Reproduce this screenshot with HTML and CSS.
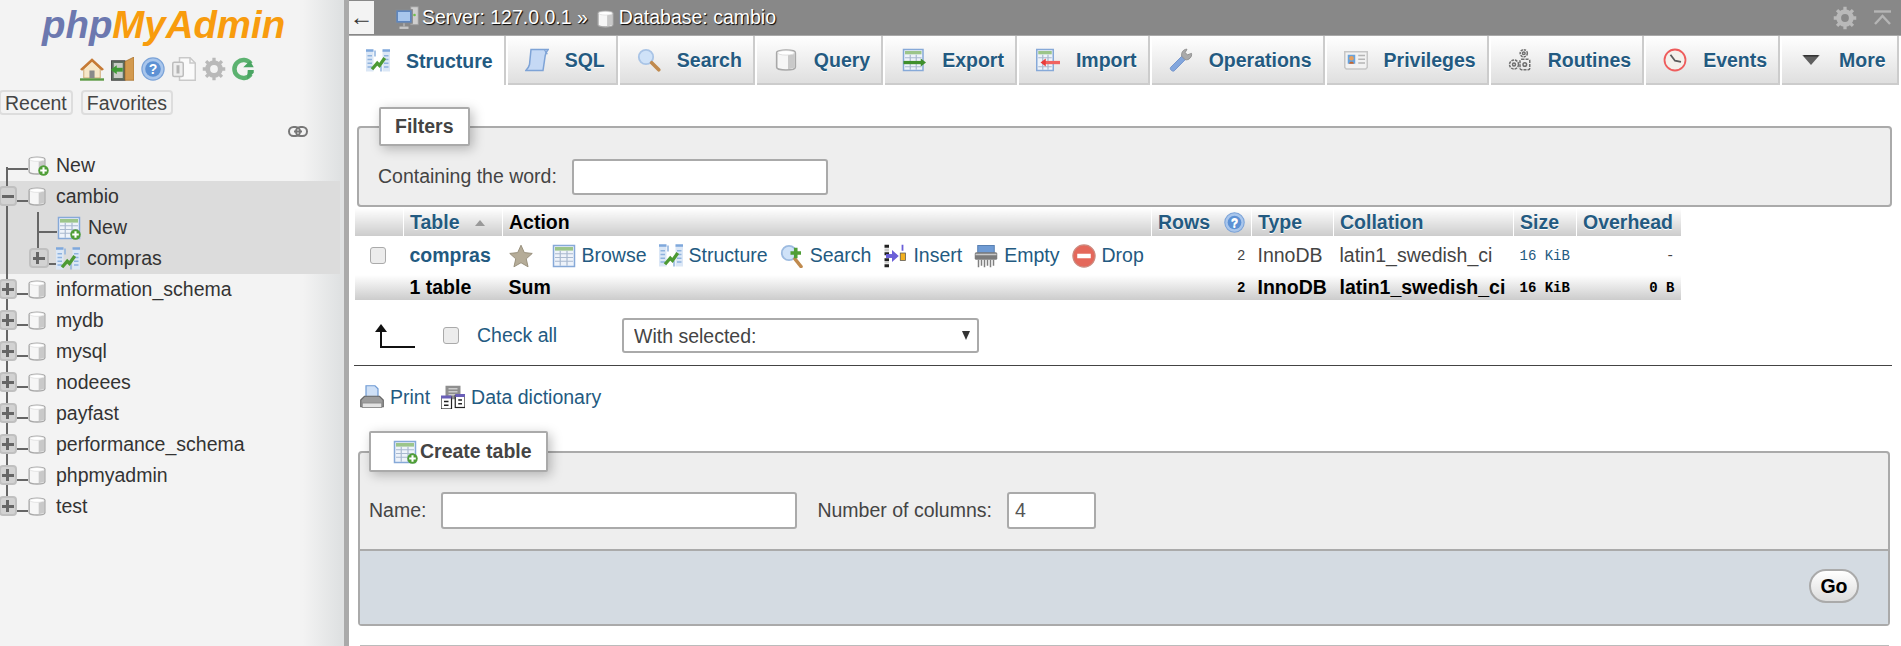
FILE: index.html
```html
<!DOCTYPE html>
<html lang="en">
<head>
    <meta charset="UTF-8">
    <title>127.0.0.1 / cambio | phpMyAdmin</title>
    <link rel="stylesheet" href="styles.css">
</head>
<body>

    <!-- Icon sprite -->
    <svg class="sprite" xmlns="http://www.w3.org/2000/svg">
        <symbol id="i-db" viewBox="0 0 16 18">
            <path d="M1 3.5C1 1 15 1 15 3.5V14.5C15 17.2 1 17.2 1 14.5Z" fill="#f6f6f6" stroke="#a8a8a8" stroke-width="1.2"/>
            <path d="M9.5 5.5V15.8C12 15.6 14.3 15 14.4 14.2V4.5Z" fill="#c9c9c9"/>
            <ellipse cx="8" cy="3.6" rx="6.4" ry="1.7" fill="#fff" stroke="#d2d2d2" stroke-width=".5"/>
        </symbol>
        <symbol id="i-plus-badge" viewBox="0 0 8 8">
            <circle cx="4" cy="4" r="3.8" fill="#4f9e37"/>
            <path d="M4 1.6V6.4M1.6 4H6.4" stroke="#fff" stroke-width="1.5"/>
        </symbol>
        <symbol id="i-table" viewBox="0 0 16 16">
            <rect x="1" y="1" width="14" height="14" fill="#eef3fa" stroke="#86a9d8"/>
            <rect x="2" y="2" width="12" height="2.4" fill="#9cc58a"/>
            <path d="M2 6.5H14M2 9H14M2 11.5H14M5.5 4.5V14.5M10 4.5V14.5" stroke="#a9b9cf" stroke-width=".8"/>
        </symbol>
        <symbol id="i-structure" viewBox="0 0 16 16">
            <rect x="0" y="1" width="5" height="14" fill="#dbe7f6"/>
            <rect x="11" y="1" width="5" height="14" fill="#dbe7f6"/>
            <path d="M0 1H5M11 1H16" stroke="#7fa8dc" stroke-width="1.6"/>
            <path d="M1 4.5H4M1 7H4M1 9.5H4M1 12H4M12 4.5H15M12 7H15M12 9.5H15M12 12H15" stroke="#8fb3de" stroke-width=".9"/>
            <path d="M6 1V5M10 11V15" stroke="#8fb3de" stroke-width="1"/>
            <path d="M4 13.5L7.5 9.5L9 11L12.5 6" fill="none" stroke="#4d9a33" stroke-width="2.2"/>
        </symbol>
        <symbol id="i-sql" viewBox="0 0 16 16">
            <path d="M4 1H15.5C14.5 2 14 3 13.5 5L12 15H.5C1.8 14 2.5 13 3 11Z" fill="#c5d9f5" stroke="#7ea3d6"/>
            <path d="M13 1.2C13.5 2.5 14 3.4 15 4" fill="none" stroke="#7ea3d6" stroke-width=".7"/>
        </symbol>
        <symbol id="i-search" viewBox="0 0 16 16">
            <circle cx="6" cy="6" r="4.8" fill="#cfe2f8" stroke="#a9c4e6" stroke-width="1.2"/>
            <path d="M9.8 9.8L14.5 14.5" stroke="#c08a4e" stroke-width="2.4" stroke-linecap="round"/>
        </symbol>
        <symbol id="i-search-add" viewBox="0 0 16 16">
            <circle cx="6" cy="6" r="4.8" fill="#cfe2f8" stroke="#9dbbe0" stroke-width="1.2"/>
            <path d="M10 10L14 15" stroke="#c08a4e" stroke-width="2.4" stroke-linecap="round"/>
            <path d="M10.5 2.5V9.5M7 6H14" stroke="#4f9e37" stroke-width="2.4"/>
        </symbol>
        <symbol id="i-export" viewBox="0 0 16 16">
            <rect x="1" y="1" width="13" height="14" fill="#eef3fa" stroke="#86a9d8"/>
            <rect x="2" y="2" width="11" height="2.2" fill="#9cc58a"/>
            <path d="M2 6.5H13M2 12.5H13M5.5 4.5V14.5M9.5 4.5V14.5" stroke="#a9b9cf" stroke-width=".8"/>
            <path d="M1 9.7H13" stroke="#3f8f2c" stroke-width="2.2"/>
            <path d="M12.5 7L16 9.7L12.5 12.4Z" fill="#3f8f2c"/>
        </symbol>
        <symbol id="i-import" viewBox="0 0 16 16">
            <rect x="0.5" y="1" width="11" height="14" fill="#eef3fa" stroke="#86a9d8"/>
            <rect x="1.5" y="2" width="9" height="2.2" fill="#9cc58a"/>
            <path d="M1.5 6.5H10.5M1.5 12.5H10.5M4.5 4.5V14.5M8 4.5V14.5" stroke="#a9b9cf" stroke-width=".8"/>
            <path d="M6 9.7H16" stroke="#f0625f" stroke-width="2.2"/>
            <path d="M6.5 7L3 9.7L6.5 12.4Z" fill="#ea3a3a"/>
        </symbol>
        <symbol id="i-wrench" viewBox="0 0 16 16">
            <path d="M1 13L8.5 5.5L10.8 7.8L3.5 15.2C2.6 16 0.3 14.5 1 13Z" fill="#82a6dd" stroke="#6d90c8" stroke-width=".6"/>
            <path d="M8.5 5.5C8 3 9.5 .8 12 .8L10.8 3L12.2 4.6L15 3.6C15.6 6 13 8.4 10.8 7.8Z" fill="#aaa" stroke="#8b8b8b" stroke-width=".6"/>
        </symbol>
        <symbol id="i-privileges" viewBox="0 0 16 16">
            <path d="M.5 2.5H15.5V13L14.5 14H1.5L.5 13Z" fill="#f2f2f2" stroke="#c6c6c6"/>
            <rect x="2.5" y="4.5" width="5" height="6" fill="#69a3dc"/>
            <circle cx="5" cy="6.8" r="1.5" fill="#e7a05d"/>
            <path d="M3.4 10.5C3.6 8.8 6.4 8.8 6.6 10.5Z" fill="#c9632b"/>
            <path d="M9.5 5H14M9.5 7.5H14M9.5 10H14" stroke="#b5b5b5"/>
        </symbol>
        <symbol id="i-routines" viewBox="0 0 16 16">
            <g fill="none" stroke="#6f6f6f" stroke-width="1">
                <circle cx="10.5" cy="3.5" r="2.4" stroke-dasharray="1.6 .6"/>
                <circle cx="10.5" cy="3.5" r=".9"/>
                <circle cx="4" cy="11" r="3" stroke-dasharray="1.8 .6"/>
                <circle cx="4" cy="11" r="1"/>
                <rect x="8" y="7.5" width="6.5" height="7" rx="1" stroke-dasharray="2 .7"/>
                <circle cx="11.2" cy="11" r="1.2"/>
            </g>
        </symbol>
        <symbol id="i-clock" viewBox="0 0 16 16">
            <circle cx="8" cy="8" r="7" fill="#f4f1ec" stroke="#ee5c5c" stroke-width="1.2"/>
            <path d="M5 4.5L8 8.5L12 9.3" fill="none" stroke="#5c5c5c" stroke-width="1.2"/>
        </symbol>
        <symbol id="i-more" viewBox="-3 -3 22 22">
            <path d="M0 3.5H16L8 12.5Z" fill="#5f5f5f"/>
            <path d="M1.5 4.2H14.5" stroke="#222"/>
        </symbol>
        <symbol id="i-server" viewBox="0 0 16 16">
            <rect x="10.5" y="0.5" width="5" height="12" fill="#cfcfcf" stroke="#9a9a9a" stroke-width=".6"/>
            <circle cx="13" cy="6" r=".9" fill="#6fbf4b"/>
            <rect x=".5" y="2.5" width="11" height="9" fill="#5f86bd" stroke="#8a8a8a" stroke-width=".8"/>
            <rect x="2" y="4" width="8" height="6" fill="#a8c6ec"/>
            <path d="M3 14.5H9" stroke="#c6c6c6" stroke-width="1.6"/>
            <path d="M6 11.5V14" stroke="#a9a9a9" stroke-width="1.4"/>
        </symbol>
        <symbol id="i-gear" viewBox="0 0 16 16">
            <circle cx="8" cy="8" r="4.3" fill="none" stroke="#b9b9b9" stroke-width="3"/>
            <path d="M8 .5V15.5M.5 8H15.5M2.7 2.7L13.3 13.3M13.3 2.7L2.7 13.3" stroke="#b9b9b9" stroke-width="2.2"/>
            <circle cx="8" cy="8" r="2.6" fill="var(--gear-hole, #f3f3f3)"/>
        </symbol>
        <symbol id="i-top" viewBox="0 0 17 16">
            <path d="M0 1.5H17" stroke="#b5b5b5" stroke-width="2.4"/>
            <path d="M1 14L8.5 6L16 14" fill="none" stroke="#b5b5b5" stroke-width="2.4"/>
        </symbol>
        <symbol id="i-home" viewBox="0 0 16 16">
            <path d="M2.5 8V14H13.5V8L8 2.5Z" fill="#f7e7c8" stroke="#c9a46a" stroke-width=".6"/>
            <path d="M0 8.2L8 .8L16 8.2L14.6 9.2L8 3.2L1.4 9.2Z" fill="#c67a35"/>
            <rect x="6.3" y="9" width="3.4" height="5" fill="#8a8a8a"/>
            <path d="M0 15H16" stroke="#5c9a44" stroke-width="1.6"/>
        </symbol>
        <symbol id="i-exit" viewBox="0 0 16 16">
            <rect x="1" y="2.5" width="9" height="13" fill="#5f6f60" stroke="#444" stroke-width=".6"/>
            <rect x="2.5" y="4" width="6" height="10" fill="#c9ccc6"/>
            <path d="M10 3L16 0V15.5L10 15.5Z" fill="#d39a4f" stroke="#a66f2a" stroke-width=".5"/>
            <path d="M8.5 8.5H3.5" stroke="#3f9a35" stroke-width="2.6"/>
            <path d="M4.5 5.5L0.5 8.5L4.5 11.5Z" fill="#3f9a35"/>
        </symbol>
        <symbol id="i-help" viewBox="0 0 16 16">
            <circle cx="8" cy="8" r="7.4" fill="#a9c6ec" stroke="#7ba3d8" stroke-width=".8"/>
            <circle cx="8" cy="8" r="5.2" fill="#5d91d4"/>
        </symbol>
        <symbol id="i-copy" viewBox="0 0 16 16">
            <path d="M5 .5H12L15.5 4V15.5H5Z" fill="#fafafa" stroke="#c9c9c9"/>
            <path d="M12 .5V4H15.5" fill="none" stroke="#c9c9c9"/>
            <rect x=".5" y="3.5" width="7" height="9.5" rx="1" fill="#eee" stroke="#bdbdbd"/>
            <rect x="3" y="5.5" width="2" height="5.5" fill="#b5b5b5"/>
        </symbol>
        <symbol id="i-reload" viewBox="0 0 16 16">
            <path d="M12.5 4.5A6 6 0 1 0 12.5 11.5" fill="none" stroke="#5cb270" stroke-width="3"/>
            <path d="M7.5 6.8H14.5L12 2.5ZM5.5 8.6H10.5L10 15L14.5 10.5V8.6Z" fill="#4aa563"/>
        </symbol>
        <symbol id="i-link" viewBox="0 0 20 11">
            <rect x="1" y="1" width="11" height="9" rx="4.5" fill="none" stroke="#777" stroke-width="2"/>
            <rect x="8" y="1" width="11" height="9" rx="4.5" fill="none" stroke="#777" stroke-width="2"/>
            <path d="M6 5.5H14" stroke="#777" stroke-width="2"/>
        </symbol>
        <symbol id="i-star" viewBox="0 0 16 16">
            <path d="M8 .8L10.2 5.7L15.5 6.3L11.5 9.9L12.7 15.2L8 12.5L3.3 15.2L4.5 9.9L.5 6.3L5.8 5.7Z" fill="#b5ac98" stroke="#938a76" stroke-width=".6"/>
        </symbol>
        <symbol id="i-insert" viewBox="0 0 16 16">
            <path d="M1 .5H4V2.5H1ZM1 5.5H4V7.5H1ZM1 13.5H4V15.5H1ZM1 9.5H4V11.5H1Z" fill="#222"/>
            <path d="M1 3H4V5H1ZM1 12H4V13H1Z" fill="#ccc"/>
            <path d="M2 8H9" stroke="#6a5fd8" stroke-width="2.6"/>
            <path d="M6 4L10.5 8L6 12Z" fill="#6a5fd8"/>
            <rect x="11.5" y="6" width="3.5" height="5" fill="#f2b01e" stroke="#555" stroke-width=".5"/>
            <path d="M13 .5V4.5" stroke="#6a5fd8" stroke-width="1.2"/>
        </symbol>
        <symbol id="i-empty" viewBox="0 0 16 16">
            <rect x="2.5" y="1" width="11" height="5" fill="#6f9bd4" stroke="#4f78ad" stroke-width=".6"/>
            <rect x=".5" y="5.5" width="15" height="5" rx="1" fill="#7b7b7b"/>
            <path d="M1 7H15" stroke="#c9c9c9"/>
            <path d="M3 10.5V15.5M5 10.5V14.5M7 10.5V15.5M9 10.5V14.5M11 10.5V15.5M13 10.5V14.5" stroke="#808080"/>
        </symbol>
        <symbol id="i-drop" viewBox="0 0 16 16">
            <circle cx="8" cy="8" r="7.4" fill="#e4685b" stroke="#cc8a7f" stroke-width=".8"/>
            <rect x="3.5" y="6.5" width="9" height="3" fill="#fff"/>
        </symbol>
        <symbol id="i-print" viewBox="0 0 16 16">
            <path d="M4 .5H10L12 2.5V8H4Z" fill="#cfe0f6" stroke="#6f9bd4" stroke-width=".8"/>
            <path d="M.5 10L3 7.5H13L15.5 10V14.5H.5Z" fill="#9c9c9c" stroke="#666" stroke-width=".8"/>
            <rect x="1.5" y="12" width="13" height="3" fill="#e2e2e2" stroke="#8a8a8a" stroke-width=".6"/>
        </symbol>
        <symbol id="i-dict" viewBox="0 0 16 16">
            <rect x="3" y=".5" width="10" height="9" fill="#8f8f8f"/>
            <path d="M5 2.5H11M5 4.5H11M5 6.5H11" stroke="#ccc"/>
            <rect x="0" y="8" width="7" height="8" fill="#fff" stroke="#222" stroke-width=".8"/>
            <rect x="9.5" y="7" width="6.5" height="8" fill="#fff" stroke="#222" stroke-width=".8"/>
            <path d="M0 8H7M9.5 7H16" stroke="#6a5fb8" stroke-width="2"/>
            <path d="M2 11H5M2 13.5H5M11.5 10H14M11.5 12.5H14" stroke="#222"/>
        </symbol>
    </svg>

    <div class="sidebar">
        <div class="logo"><span class="logo-php">php</span><span class="logo-rest">MyAdmin</span></div>
        <div class="quick-icons">
            <svg class="icon"><use href="#i-home"/></svg>
            <svg class="icon"><use href="#i-exit"/></svg>
            <svg class="icon" viewBox="0 0 24 24"><use href="#i-help" width="24" height="24"/><text x="12" y="17" text-anchor="middle" class="help-mark">?</text></svg>
            <svg class="icon"><use href="#i-copy"/></svg>
            <svg class="icon"><use href="#i-gear"/></svg>
            <svg class="icon"><use href="#i-reload"/></svg>
        </div>
        <div class="recent-row">
            <button class="recent-btn">Recent</button>
            <button class="recent-btn">Favorites</button>
        </div>
        <div class="link-row"><svg class="link-icon"><use href="#i-link"/></svg></div>

        <ul class="tree">
            <li class="tree-row first">
                <span class="dash long"></span>
                <span class="tree-icon"><svg class="db-icon"><use href="#i-db"/></svg><svg class="badge"><use href="#i-plus-badge"/></svg></span>
                New
            </li>
            <li class="tree-row selected">
                <span class="expander minus"></span><span class="dash"></span>
                <svg class="db-icon"><use href="#i-db"/></svg>
                cambio
            </li>
            <li class="tree-row selected nested nested-new">
                <span class="dash nested-dash"></span>
                <span class="tree-icon"><svg class="icon"><use href="#i-table"/></svg><svg class="badge"><use href="#i-plus-badge"/></svg></span>
                New
            </li>
            <li class="tree-row selected nested nested-last">
                <span class="expander plus"></span><span class="dash short"></span>
                <svg class="icon"><use href="#i-structure"/></svg>
                compras
            </li>
            <li class="tree-row"><span class="expander plus"></span><span class="dash"></span><svg class="db-icon"><use href="#i-db"/></svg>information_schema</li>
            <li class="tree-row"><span class="expander plus"></span><span class="dash"></span><svg class="db-icon"><use href="#i-db"/></svg>mydb</li>
            <li class="tree-row"><span class="expander plus"></span><span class="dash"></span><svg class="db-icon"><use href="#i-db"/></svg>mysql</li>
            <li class="tree-row"><span class="expander plus"></span><span class="dash"></span><svg class="db-icon"><use href="#i-db"/></svg>nodeees</li>
            <li class="tree-row"><span class="expander plus"></span><span class="dash"></span><svg class="db-icon"><use href="#i-db"/></svg>payfast</li>
            <li class="tree-row"><span class="expander plus"></span><span class="dash"></span><svg class="db-icon"><use href="#i-db"/></svg>performance_schema</li>
            <li class="tree-row"><span class="expander plus"></span><span class="dash"></span><svg class="db-icon"><use href="#i-db"/></svg>phpmyadmin</li>
            <li class="tree-row last"><span class="expander plus"></span><span class="dash"></span><svg class="db-icon"><use href="#i-db"/></svg>test</li>
        </ul>
    </div>

    <div class="main">
        <div class="topbar">
            <button class="back-btn">&#8592;</button>
            <div class="crumbs">
                <svg class="icon"><use href="#i-server"/></svg>
                <span class="crumb-text">Server: 127.0.0.1 &raquo;</span>
                <svg class="crumb-db"><use href="#i-db"/></svg>
                <span class="crumb-text">Database: cambio</span>
            </div>
            <div class="top-tools">
                <svg class="icon gear-dark"><use href="#i-gear"/></svg>
                <svg class="top-arrow"><use href="#i-top"/></svg>
            </div>
        </div>

        <div class="tabs">
            <a class="tab active"><svg class="icon"><use href="#i-structure"/></svg>Structure</a>
            <a class="tab"><svg class="icon"><use href="#i-sql"/></svg>SQL</a>
            <a class="tab"><svg class="icon"><use href="#i-search"/></svg>Search</a>
            <a class="tab"><svg class="icon"><use href="#i-db"/></svg>Query</a>
            <a class="tab"><svg class="icon"><use href="#i-export"/></svg>Export</a>
            <a class="tab"><svg class="icon"><use href="#i-import"/></svg>Import</a>
            <a class="tab"><svg class="icon"><use href="#i-wrench"/></svg>Operations</a>
            <a class="tab"><svg class="icon"><use href="#i-privileges"/></svg>Privileges</a>
            <a class="tab"><svg class="icon"><use href="#i-routines"/></svg>Routines</a>
            <a class="tab"><svg class="icon"><use href="#i-clock"/></svg>Events</a>
            <a class="tab"><svg class="icon"><use href="#i-more"/></svg>More</a>
        </div>

        <!-- Filters -->
        <fieldset class="box filters">
            <legend class="box-title">Filters</legend>
            <div class="filter-row">
                <label class="filter-label">Containing the word:</label>
                <input type="text" class="input-box filter-input">
            </div>
        </fieldset>

        <!-- Table list -->
        <table class="db-table">
            <thead>
                <tr>
                    <th class="col-check"></th>
                    <th class="col-name"><a>Table</a><span class="sort-arrow"></span></th>
                    <th class="col-action head-dark">Action</th>
                    <th class="col-rows"><a>Rows</a><svg class="rows-help" viewBox="0 0 24 24"><use href="#i-help" width="24" height="24"/><text x="12" y="17" text-anchor="middle" class="help-mark">?</text></svg></th>
                    <th class="col-type"><a>Type</a></th>
                    <th class="col-coll"><a>Collation</a></th>
                    <th class="col-size"><a>Size</a></th>
                    <th class="col-over"><a>Overhead</a></th>
                </tr>
            </thead>
            <tbody>
                <tr>
                    <td class="cell-check"><input type="checkbox" class="check"></td>
                    <td class="table-name">compras</td>
                    <td>
                        <div class="actions">
                            <svg class="icon star"><use href="#i-star"/></svg>
                            <a class="action"><svg class="icon"><use href="#i-table"/></svg>Browse</a>
                            <a class="action"><svg class="icon"><use href="#i-structure"/></svg>Structure</a>
                            <a class="action"><svg class="icon"><use href="#i-search-add"/></svg>Search</a>
                            <a class="action"><svg class="icon"><use href="#i-insert"/></svg>Insert</a>
                            <a class="action"><svg class="icon"><use href="#i-empty"/></svg>Empty</a>
                            <a class="action"><svg class="icon"><use href="#i-drop"/></svg>Drop</a>
                        </div>
                    </td>
                    <td class="num">2</td>
                    <td>InnoDB</td>
                    <td>latin1_swedish_ci</td>
                    <td class="num size">16 KiB</td>
                    <td class="num">-</td>
                </tr>
            </tbody>
            <tfoot>
                <tr>
                    <th></th>
                    <th>1 table</th>
                    <th>Sum</th>
                    <th class="num">2</th>
                    <th>InnoDB</th>
                    <th>latin1_swedish_ci</th>
                    <th class="num size">16 KiB</th>
                    <th class="num">0 B</th>
                </tr>
            </tfoot>
        </table>

        <div class="bulk-row">
            <svg class="bulk-arrow" viewBox="0 0 42 24"><path d="M8 24V5M8 23H42" fill="none" stroke="#111" stroke-width="2"/><path d="M2 8L8 0L14 8Z" fill="#111"/></svg>
            <input type="checkbox" class="check">
            <a class="check-all">Check all</a>
            <div class="select-wrap">
                <select class="bulk-select"><option>With selected:</option></select>
            </div>
        </div>
        <hr class="bulk-rule">

        <div class="print-row">
            <a class="action"><svg class="icon"><use href="#i-print"/></svg>Print</a>
            <a class="action"><svg class="icon"><use href="#i-dict"/></svg>Data dictionary</a>
        </div>

        <!-- Create table -->
        <fieldset class="box create">
            <legend class="box-title create-title"><svg class="icon-tree"><use href="#i-table"/></svg><svg class="badge legend-badge"><use href="#i-plus-badge"/></svg>Create table</legend>
            <div class="create-row">
                <label>Name:</label>
                <input type="text" class="input-box name-input">
                <label class="cols-label">Number of columns:</label>
                <input type="text" class="input-box cols-input" value="4">
            </div>
            <div class="box-footer"><button class="go-btn">Go</button></div>
        </fieldset>
        <hr class="end-rule">
    </div>

</body>
</html>
```

FILE: styles.css
```css
* {
    margin: 0;
    padding: 0;
    box-sizing: border-box;
    font-family: "Liberation Sans", Arial, sans-serif;
}
html, body {
    height: 100%;
    overflow: hidden;
}
body {
    display: flex;
    background: #fff;
    color: #444;
    font-size: 19.5px;
}
a {
    color: #235a81;
}
.sprite {
    width: 0;
    height: 0;
    position: absolute;
}
.icon {
    width: 24px;
    height: 24px;
    flex: none;
}
.help-mark {
    fill: #fff;
    font-size: 14px;
    font-weight: bold;
}

/* Sidebar */
.sidebar {
    width: 349px;
    flex: none;
    height: 646px;
    overflow: hidden;
    background: linear-gradient(to right, #f3f3f3 88%, #dfe1e2 99%);
    border-right: 5px solid #aaa;
}
.logo {
    height: 57px;
    padding: 3px 0 0 42px;
    font-size: 38.4px;
    line-height: 44px;
    font-weight: bold;
    font-style: italic;
}
.logo-php {
    color: #6c78af;
}
.logo-rest {
    color: #f89c0e;
}
.quick-icons {
    display: flex;
    gap: 6px;
    padding-left: 80px;
    height: 33px;
}
.quick-icons .icon:nth-child(3) {
    margin: 0 1px;
}
.recent-row {
    display: flex;
    gap: 8px;
    margin-left: -1px;
}
.recent-btn {
    height: 25px;
    padding: 0 4px;
    background: #f3f3f3;
    border: 2px solid #ddd;
    border-radius: 4px;
    color: #444;
    font-size: 19.5px;
    line-height: 20px;
}
.link-row {
    height: 35px;
    padding: 11px 0 0 288px;
}
.link-icon {
    width: 20px;
    height: 11px;
    display: block;
}
.tree {
    list-style: none;
    width: 340px;
}
.tree-row {
    height: 31px;
    display: flex;
    align-items: center;
    position: relative;
    color: #333;
}
.tree-row.selected {
    background: #dcdcdc;
}
.tree-row::before {
    content: "";
    position: absolute;
    left: 6px;
    top: 0;
    bottom: 0;
    width: 2px;
    background: #666;
}
.tree-row.first::before {
    top: 17px;
}
.tree-row.last::before {
    bottom: 20px;
}
.nested::after {
    content: "";
    position: absolute;
    left: 37px;
    top: 0;
    bottom: 0;
    width: 2px;
    background: #666;
}
.nested-last::after {
    bottom: 26px;
}
.expander {
    width: 18px;
    height: 20px;
    flex: none;
    margin-left: -1px;
    margin-top: -1px;
    position: relative;
    z-index: 1;
    background-color: #d2d2d2;
    border: 2px solid #c0c0c0;
    border-radius: 4px;
    background-image: linear-gradient(#666, #666);
    background-size: 12px 3px;
    background-position: center;
    background-repeat: no-repeat;
}
.expander.plus::after {
    content: "";
    position: absolute;
    left: 5px;
    top: 2px;
    width: 3px;
    height: 12px;
    background: #666;
}
.nested-last .expander {
    width: 20px;
    margin-left: 29px;
}
.dash {
    width: 11px;
    height: 2px;
    flex: none;
    background: #666;
    margin-top: 9px;
}
.dash.long {
    width: 21px;
    margin-left: 7px;
    margin-top: 6px;
}
.dash.short {
    width: 7px;
    margin-top: 10px;
}
.dash.nested-dash {
    width: 19px;
    margin-left: 38px;
    margin-top: 8px;
}
.db-icon {
    width: 18px;
    height: 21px;
    flex: none;
    margin-right: 10px;
    margin-top: -1px;
}
.tree-row .icon {
    margin-right: 7px;
}
.tree-icon {
    position: relative;
    display: flex;
    flex: none;
}
.badge {
    width: 11px;
    height: 11px;
    position: absolute;
    right: 7px;
    bottom: 0;
}

/* Top bar */
.main {
    flex: 1;
    min-width: 0;
    display: flex;
    flex-direction: column;
}
.topbar {
    height: 36px;
    flex: none;
    display: flex;
    align-items: center;
    background: #888;
    border-bottom: 1px solid #aaa;
}
.back-btn {
    width: 25px;
    height: 33px;
    margin-bottom: 1px;
    background: #f3f3f3;
    border: none;
    color: #333;
    font-size: 24px;
    line-height: 28px;
}
.crumbs {
    display: flex;
    align-items: center;
    padding-left: 21px;
    flex: 1;
}
.crumb-text {
    color: #fff;
    text-shadow: 1px 1px 1px #000;
    margin-left: 3px;
}
.crumb-db {
    width: 17px;
    height: 20px;
    margin: 2px 2px 0 9px;
}
.top-tools {
    display: flex;
    align-items: center;
    gap: 17px;
    padding-right: 10px;
}
.gear-dark {
    --gear-hole: #888;
}
.top-arrow {
    width: 17px;
    height: 16px;
}

/* Tabs */
.tabs {
    height: 49px;
    flex: none;
    display: flex;
    gap: 2px;
}
.tab {
    display: flex;
    align-items: center;
    gap: 16px;
    padding: 2px 11px 0 17px;
    background: linear-gradient(#fff, #dfdfdf);
    border-bottom: 2px solid #ccc;
    border-right: 2px solid #ccc;
    font-weight: bold;
    text-shadow: 0 1px 0 #fff;
}
.tab .icon {
    margin-top: -2px;
}
.tab.active {
    background: #fff;
    border-bottom: none;
}

/* Fieldsets */
.box {
    background: #eee;
    border: 2px solid #aaa;
    border-radius: 4px;
}
.box-title {
    height: 39px;
    background: #fff;
    border: 2px solid #aaa;
    border-radius: 2px;
    box-shadow: 3px 3px 12px rgba(0, 0, 0, 0.25);
    color: #444;
    font-weight: bold;
    line-height: 35px;
}
.filters {
    margin: 22px 9px 0 8px;
    padding: 13px 20px 10px 19px;
}
.filters .box-title {
    width: 91px;
    margin-left: 1px;
    padding: 0 14px;
}
.filter-row {
    display: flex;
    align-items: center;
    gap: 15px;
}
.filter-label {
    margin-bottom: 2px;
}
.input-box {
    height: 37px;
    background: #fff;
    border: 2px solid #aaa;
    border-radius: 3px;
    color: #555;
    font-size: 19.5px;
    padding-left: 6px;
}
.filter-input {
    width: 256px;
    height: 36px;
}

/* Table */
.db-table {
    margin: 1px 0 0 5px;
    width: 1326px;
    table-layout: fixed;
    border-collapse: collapse;
}
.db-table th, .db-table td {
    padding: 0 6px;
    text-align: left;
    white-space: nowrap;
}
.db-table thead th {
    height: 28px;
    background: linear-gradient(#fff, #ccc);
    border-left: 1px solid #fff;
    color: #235a81;
    text-shadow: 0 1px 0 #fff;
}
.db-table thead th.head-dark {
    color: #000;
}
.db-table tbody td {
    height: 39px;
}
.db-table tfoot th {
    height: 25px;
    background: linear-gradient(#fff, #ccc);
    color: #000;
}
.col-check { width: 49px; }
.col-name { width: 99px; }
.col-action { width: 649px; }
.col-rows { width: 100px; }
.col-type { width: 82px; }
.col-coll { width: 180px; }
.col-size { width: 63px; }
.col-over { width: 104px; }
.sort-arrow {
    display: inline-block;
    margin: 0 0 3px 16px;
    border-left: 5px solid transparent;
    border-right: 5px solid transparent;
    border-bottom: 6px solid #999;
}
.rows-help {
    width: 21px;
    height: 21px;
    margin-left: 14px;
    vertical-align: -4px;
}
.cell-check {
    padding-left: 15px !important;
}
.check {
    appearance: none;
    display: block;
    width: 16px;
    height: 17px;
    flex: none;
    background: #ececec;
    border: 1px solid #aaa;
    border-radius: 3px;
}
.table-name {
    color: #235a81;
    font-weight: bold;
}
.actions {
    display: flex;
    align-items: center;
    gap: 12px;
}
.action {
    display: flex;
    align-items: center;
    gap: 6px;
}
.star {
    margin-right: 7px;
}
.db-table .num {
    padding-right: 6px;
    text-align: right;
    font-family: "Liberation Mono", monospace;
    font-size: 14px;
}
.db-table .size {
    text-align: left;
    color: #235a81;
}
.db-table tfoot .size {
    color: #000;
}

/* Below the table */
.bulk-row {
    height: 65px;
    flex: none;
    display: flex;
    align-items: center;
    padding: 6px 0 0 24px;
}
.bulk-arrow {
    width: 42px;
    height: 24px;
    margin-right: 28px;
    flex: none;
}
.check-all {
    margin-left: 18px;
    width: 145px;
}
.select-wrap {
    position: relative;
    width: 357px;
    height: 35px;
}
.select-wrap::after {
    content: "";
    position: absolute;
    right: 9px;
    top: 13px;
    border-left: 4px solid transparent;
    border-right: 4px solid transparent;
    border-top: 9px solid #333;
}
.bulk-select {
    appearance: none;
    display: block;
    width: 100%;
    height: 100%;
    padding-left: 10px;
    background: #fff;
    border: 2px solid #aaa;
    border-radius: 3px;
    color: #444;
    font-size: 19.5px;
}
.bulk-rule {
    margin: 0 9px 0 5px;
    border: none;
    border-top: 1px solid #444;
    flex: none;
}
.print-row {
    display: flex;
    gap: 11px;
    padding: 19px 0 0 11px;
    flex: none;
}

/* Create table */
.create {
    margin: 22px 11px 0 9px;
    padding: 0;
}
.create-title {
    width: 179px;
    margin-left: 9px;
    height: 41px;
    display: flex;
    align-items: center;
    padding-left: 22px;
    position: relative;
}
.icon-tree {
    width: 24px;
    height: 24px;
    margin-right: 3px;
    flex: none;
}
.legend-badge {
    left: 36px;
    right: auto;
    bottom: 6px;
}
.create-row {
    display: flex;
    align-items: center;
    padding: 20px 0 20px 9px;
}
.name-input {
    width: 356px;
    margin-left: 15px;
}
.cols-label {
    margin-left: 20px;
}
.cols-input {
    width: 89px;
    margin-left: 15px;
}
.box-footer {
    height: 75px;
    padding: 18px 29px 0 0;
    display: flex;
    justify-content: flex-end;
    align-items: flex-start;
    background: #d4dbe2;
    border-top: 2px solid #aaa;
}
.go-btn {
    width: 50px;
    height: 34px;
    background: linear-gradient(#fff, #ddd);
    border: 2px solid #aaa;
    border-radius: 17px;
    color: #000;
    font-size: 19.5px;
    font-weight: bold;
}
.end-rule {
    margin: 19px 12px 0 11px;
    border: none;
    border-top: 2px solid #bbb;
    flex: none;
}
```
